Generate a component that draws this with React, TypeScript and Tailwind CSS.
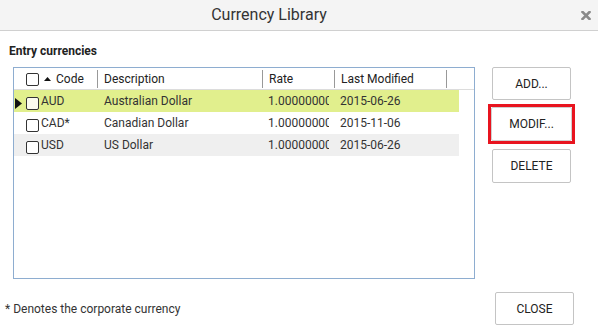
import React from "react";

interface Currency {
  code: string;
  description: string;
  rate: string;
  modified: string;
}

const CURRENCIES: Currency[] = [
  { code: "AUD", description: "Australian Dollar", rate: "1.00000000", modified: "2015-06-26" },
  { code: "CAD*", description: "Canadian Dollar", rate: "1.00000000", modified: "2015-11-06" },
  { code: "USD", description: "US Dollar", rate: "1.00000000", modified: "2015-06-26" },
];

const COLS = "grid grid-cols-[83px_165px_72px_112px_13px]";

function Checkbox({ tinted }: { tinted?: boolean }) {
  return (
    <span
      className={
        "block w-[13px] h-[13px] shrink-0 rounded-[2px] border border-[#333] " +
        (tinted ? "bg-[#fbfbee]" : "bg-white")
      }
    />
  );
}

function Button({ label, className = "" }: { label: string; className?: string }) {
  return (
    <button
      className={
        "w-[79px] h-[33px] rounded-[2px] border border-[#c4c4c4] bg-white text-[12px] text-[#222] " +
        className
      }
    >
      {label}
    </button>
  );
}

export default function App() {
  return (
    <div className="w-[598px] h-[332px] bg-white text-[#333] font-['Roboto',sans-serif] overflow-hidden">
      {/* Title bar */}
      <div className="flex items-center h-[31px] bg-[#f4f4f4] border-b border-[#d0d0d0]">
        <div className="w-[538px] text-center text-[16px] text-[#333]">Currency Library</div>
        <div className="flex-1 flex justify-end pr-[6px]">
          <svg width="10" height="9" viewBox="0 0 10 9" className="mr-[1px]">
            <path d="M1.5 1 L8.5 8 M8.5 1 L1.5 8" stroke="#8a8a8a" strokeWidth="2.6" strokeLinecap="square" />
          </svg>
        </div>
      </div>

      <div className="pl-[9px] pt-[12px] text-[12px] leading-[16px] font-bold text-[#222]">Entry currencies</div>

      <div className="flex mt-[8px] pl-[13px]">
        {/* Grid */}
        <div className="w-[462px] h-[212px] border border-[#8eadd0] overflow-hidden">
          <div className={COLS + " h-[22px] border-b border-[#dcdcdc] text-[12px] text-[#222]"}>
            <div className="flex items-center pl-[12px]">
              <Checkbox />
              <svg width="7" height="4" viewBox="0 0 7 4" className="ml-[5px] mr-[5px]">
                <path d="M0 4 L3.5 0 L7 4 Z" fill="#111" />
              </svg>
              Code
            </div>
            <div className="flex items-center pl-[6px] border-l border-[#999] my-[2px]">Description</div>
            <div className="flex items-center pl-[6px] border-l border-[#999] my-[2px]">Rate</div>
            <div className="flex items-center pl-[6px] border-l border-[#999] my-[2px]">Last Modified</div>
            <div className="border-l border-[#999] my-[2px]" />
          </div>

          {CURRENCIES.map((c, i) => (
            <div
              key={c.code}
              className={
                COLS +
                " h-[22px] w-[445px] text-[12px] text-[#333] " +
                (i === 0 ? "bg-[#e1ef8d]" : i === 2 ? "bg-[#efefef]" : "bg-white")
              }
            >
              <div className="flex items-center">
                <span className="w-[12px] shrink-0 flex justify-start">
                  {i === 0 && (
                    <svg width="7" height="11" viewBox="0 0 7 11" className="mt-[4px] ml-[1px]">
                      <path d="M0 0 L7 5.5 L0 11 Z" fill="#111" />
                    </svg>
                  )}
                </span>
                <span className="mt-[5px]">
                  <Checkbox tinted={i === 0} />
                </span>
                <span className="ml-[2px]">{c.code}</span>
              </div>
              <div className="flex items-center pl-[7px] whitespace-nowrap overflow-hidden">{c.description}</div>
              <div className="flex items-center pl-[6px] pr-[5px] whitespace-nowrap overflow-hidden">
                <span className="overflow-hidden">{c.rate}</span>
              </div>
              <div className="flex items-center pl-[6px] whitespace-nowrap overflow-hidden">{c.modified}</div>
              <div />
            </div>
          ))}
        </div>

        {/* Actions */}
        <div className="flex flex-col ml-[17px] gap-[6px]">
          <Button label="ADD..." />
          <div className="outline-[3px] outline outline-[#e8141f] -ml-[1px] w-[81px] mt-[1px]">
            <Button label="MODIF..." className="w-[81px] h-[34px] border-[#d0d0d0]" />
          </div>
          <Button label="DELETE" className="mt-[2px] h-[34px]" />
        </div>
      </div>

      {/* Footer */}
      <div className="flex items-center mt-[13px] pl-[5px] pr-[24px]">
        <div className="flex-1 text-[12px] text-[#333]">* Denotes the corporate currency</div>
        <Button label="CLOSE" className="w-[78px]" />
      </div>
    </div>
  );
}
